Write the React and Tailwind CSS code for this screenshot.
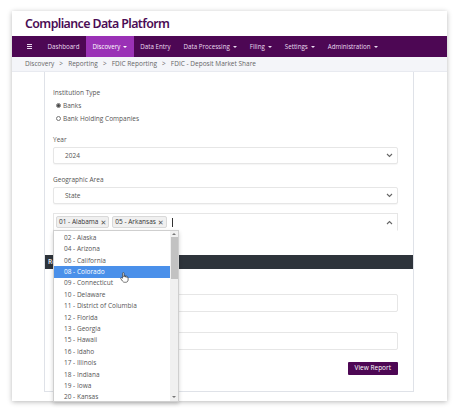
import { useState } from "react";

const states = [
	"02 - Alaska",
	"04 - Arizona",
	"06 - California",
	"08 - Colorado",
	"09 - Connecticut",
	"10 - Delaware",
	"11 - District of Columbia",
	"12 - Florida",
	"13 - Georgia",
	"15 - Hawaii",
	"16 - Idaho",
	"17 - Illinois",
	"18 - Indiana",
	"19 - Iowa",
	"20 - Kansas",
];

const navItems = [
	{ label: "Dashboard" },
	{ label: "Discovery", caret: true, active: true },
	{ label: "Data Entry" },
	{ label: "Data Processing", caret: true },
	{ label: "Filing", caret: true },
	{ label: "Settings", caret: true },
	{ label: "Administration", caret: true },
];

function Caret() {
	return <span className="ml-[3px] inline-block border-x-[2px] border-t-[2.5px] border-x-transparent border-t-current align-middle" />;
}

function Chevron({ up }) {
	return (
		<svg width="7" height="5" viewBox="0 0 7 5" className="text-[#666]">
			<path d={up ? "M1 4 L3.5 1.5 L6 4" : "M1 1 L3.5 3.5 L6 1"} fill="none" stroke="currentColor" strokeWidth="1.1" />
		</svg>
	);
}

function Select({ value }) {
	return (
		<div className="flex h-[17px] items-center justify-between rounded-[2px] border border-[#e6e6e6] bg-white pl-[11px] pr-[4px] shadow-[0_1px_1px_rgba(0,0,0,0.04)]">
			<span>{value}</span>
			<Chevron />
		</div>
	);
}

function Tag({ children }) {
	return (
		<span className="flex h-[12px] items-center gap-[2px] rounded-[2px] border border-[#d9d9d9] bg-[#f0f0f0] px-[2px] text-[#333]">
			{children}
			<span className="text-[7px] leading-none text-[#555]">✕</span>
		</span>
	);
}

function Hand() {
	return (
		<svg width="9" height="11" viewBox="0 0 9 11" className="absolute left-[66px] top-[41px]">
			<path
				d="M2.6 6.2 V1.3 a0.7 0.7 0 0 1 1.4 0 V5 V4.2 a0.7 0.7 0 0 1 1.4 0 V5.2 V4.6 a0.7 0.7 0 0 1 1.4 0 V5.5 a0.7 0.7 0 0 1 1.3 0.2 V8 C8 9.4 7.1 10.3 5.6 10.3 H4.6 C3.6 10.3 3 9.8 2.4 9 L0.9 6.9 a0.7 0.7 0 0 1 1 -1 Z"
				fill="white"
				stroke="#333"
				strokeWidth="0.7"
				strokeLinejoin="round"
			/>
		</svg>
	);
}

export default function App() {
	const [selected] = useState("08 - Colorado");

	return (
		<div className="h-[412px] w-[459px] bg-white pl-[12px] pt-[11px]" style={{ fontFamily: '"Open Sans", "DejaVu Sans", sans-serif' }}>
			<div className="flex h-[390px] w-[435px] flex-col bg-white shadow-[0_1px_5px_rgba(0,0,0,0.28)]">
				<div className="flex h-[25px] items-center pl-[13px] pt-[2px]">
					<h1 className="text-[12.4px] font-semibold leading-none tracking-[-0.6px] text-[#4b0d55]" style={{ fontFamily: '"Noto Sans", sans-serif' }}>
						Compliance Data Platform
					</h1>
				</div>

				<nav className="flex h-[21px] items-stretch bg-[#4d0754] text-[6.2px] text-[#eadcf0]">
					<div className="flex w-[29px] items-center justify-end pr-[9px]">
						<svg width="5" height="5" viewBox="0 0 5 5">
							<rect x="0" y="0" width="5" height="1" fill="#eadcf0" />
							<rect x="0" y="2" width="5" height="1" fill="#eadcf0" />
							<rect x="0" y="4" width="5" height="1" fill="#eadcf0" />
						</svg>
					</div>
					{navItems.map((item) => (
						<div
							key={item.label}
							className={
								item.active
									? "flex items-center bg-[#9a31b6] px-[6.5px] text-white"
									: "flex items-center px-[6.5px]"
							}
						>
							{item.label}
							{item.caret && <Caret />}
						</div>
					))}
				</nav>

				<div className="flex h-[15px] items-center border-b border-[#e8eaf0] bg-[#f4f5f9] pl-[13px] text-[6.5px] text-[#666]">
					Discovery&nbsp;&nbsp;&nbsp;&gt;&nbsp;&nbsp;&nbsp;Reporting&nbsp;&nbsp;&nbsp;&gt;&nbsp;&nbsp;&nbsp;FDIC Reporting&nbsp;&nbsp;&nbsp;&gt;&nbsp;&nbsp;&nbsp;FDIC - Deposit Market Share
				</div>

				<div className="flex flex-1 pb-[9px]">
					<div className="w-[32px]" />
					<div className="w-[370px] border-x border-b border-[#dfe2e8] text-[6.5px] text-[#555]">
						<div className="pl-[8px] pr-[15px] pt-[16px]">
							<div className="leading-[9px]">Institution Type</div>
							<div className="mt-[4px] flex items-center gap-[2px] pl-[3px] leading-[9px]">
								<span className="flex h-[5px] w-[5px] items-center justify-center rounded-full border border-[#777] bg-white">
									<span className="h-[2.5px] w-[2.5px] rounded-full bg-[#444]" />
								</span>
								Banks
							</div>
							<div className="mt-[4px] flex items-center gap-[2px] pl-[3px] leading-[9px]">
								<span className="h-[5px] w-[5px] rounded-full border border-[#777] bg-white" />
								Bank Holding Companies
							</div>

							<div className="mt-[12px] leading-[9px]">Year</div>
							<div className="mt-[3px]">
								<Select value="2024" />
							</div>

							<div className="mt-[11px] leading-[9px]">Geographic Area</div>
							<div className="mt-[3px]">
								<Select value="State" />
							</div>

							<div className="relative mt-[9px]">
								<div className="flex h-[18px] items-center justify-between border border-b-transparent border-[#e6e6e6] pl-[2px] pr-[4px]">
									<div className="flex items-center gap-[3px]">
										<Tag>01 - Alabama</Tag>
										<Tag>05 - Arkansas</Tag>
										<span className="ml-[2px] h-[9px] w-px bg-[#333]" />
									</div>
									<Chevron up />
								</div>

								<div className="absolute left-0 top-[17px] z-10 flex h-[172px] w-[126px] border border-[#cfcfcf] bg-white shadow-[0_2px_4px_rgba(0,0,0,0.18)]">
									<ul className="flex-1 pt-[1px]">
										{states.map((s) => (
											<li
												key={s}
												className={
													s === selected
														? "flex h-[11.4px] items-center bg-[#4a90ea] pl-[10px] text-white"
														: "flex h-[11.4px] items-center pl-[10px] text-[#555]"
												}
											>
												{s}
											</li>
										))}
									</ul>
									<div className="flex w-[8px] flex-col items-center bg-[#f0f0f0]">
										<span className="mt-[2px] border-x-[2px] border-b-[2px] border-x-transparent border-b-[#777]" />
										<div className="mt-[2px] h-[42px] w-[7px] bg-[#c2c2c2]" />
										<div className="flex-1" />
										<span className="mb-[3px] border-x-[2px] border-t-[2px] border-x-transparent border-t-[#777]" />
									</div>
									<Hand />
								</div>
							</div>
						</div>

						<div className="mt-[24px] flex h-[14px] items-center bg-[#2e343b] pl-[3px] text-[6.5px] font-semibold text-white">
							Report Parameters
						</div>

						<div className="pl-[8px] pr-[15px]">
							<div className="mt-[25px] h-[18px] rounded-[2px] border border-[#e6e6e6] bg-white" />
							<div className="mt-[20px] h-[18px] rounded-[2px] border border-[#e6e6e6] bg-white" />
							<div className="mt-[12px] flex justify-end">
								<button className="h-[13px] rounded-[1px] bg-[#4d0754] px-[7px] text-[6.5px] leading-none text-white">
									View Report
								</button>
							</div>
						</div>
					</div>
					<div className="flex-1" />
				</div>
			</div>
		</div>
	);
}
